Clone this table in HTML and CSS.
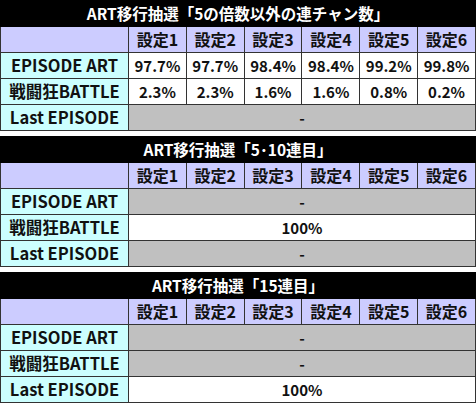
FILE: index.html
```html
<!DOCTYPE html>
<html lang="ja">
<head>
  <meta charset="UTF-8" />
  <meta name="viewport" content="width=device-width, initial-scale=1.0" />
  <title>ART移行抽選</title>
  <link rel="stylesheet" href="styles.css">
</head>
<body>
  <table class="rate-table">
    <colgroup><col class="col-label"><col><col><col><col><col><col></colgroup>
    <tr><th class="title" colspan="7">ART移行抽選「5の倍数以外の連チャン数」</th></tr>
    <tr class="settings"><th class="blank"></th><th>設定1</th><th>設定2</th><th>設定3</th><th>設定4</th><th>設定5</th><th>設定6</th></tr>
    <tr><th class="label">EPISODE ART</th><td>97.7%</td><td>97.7%</td><td>98.4%</td><td>98.4%</td><td>99.2%</td><td>99.8%</td></tr>
    <tr><th class="label">戦闘狂BATTLE</th><td>2.3%</td><td>2.3%</td><td>1.6%</td><td>1.6%</td><td>0.8%</td><td>0.2%</td></tr>
    <tr><th class="label">Last EPISODE</th><td class="none" colspan="6">-</td></tr>
  </table>

  <table class="rate-table">
    <colgroup><col class="col-label"><col><col><col><col><col><col></colgroup>
    <tr><th class="title" colspan="7">ART移行抽選「5･10連目」</th></tr>
    <tr class="settings"><th class="blank"></th><th>設定1</th><th>設定2</th><th>設定3</th><th>設定4</th><th>設定5</th><th>設定6</th></tr>
    <tr><th class="label">EPISODE ART</th><td class="none" colspan="6">-</td></tr>
    <tr><th class="label">戦闘狂BATTLE</th><td colspan="6">100%</td></tr>
    <tr><th class="label">Last EPISODE</th><td class="none" colspan="6">-</td></tr>
  </table>

  <table class="rate-table">
    <colgroup><col class="col-label"><col><col><col><col><col><col></colgroup>
    <tr><th class="title" colspan="7">ART移行抽選「15連目」</th></tr>
    <tr class="settings"><th class="blank"></th><th>設定1</th><th>設定2</th><th>設定3</th><th>設定4</th><th>設定5</th><th>設定6</th></tr>
    <tr><th class="label">EPISODE ART</th><td class="none" colspan="6">-</td></tr>
    <tr><th class="label">戦闘狂BATTLE</th><td class="none" colspan="6">-</td></tr>
    <tr><th class="label">Last EPISODE</th><td colspan="6">100%</td></tr>
  </table>
</body>
</html>
```

FILE: styles.css
```css
body {
  margin: 0;
  background-color: white;
  font-family: "Noto Sans CJK JP", "Noto Sans", sans-serif;
}
.rate-table {
  width: 476px;
  table-layout: fixed;
  border-collapse: collapse;
  margin-bottom: 5px;
  font-size: 15px;
  font-weight: bold;
  color: #111;
}
.col-label {
  width: 128px;
}
.rate-table th, .rate-table td {
  border: 1px solid #333;
  height: 25px;
  padding: 0;
  text-align: center;
  line-height: 25px;
  white-space: nowrap;
}
.rate-table .title {
  background-color: #000;
  color: white;
  border-color: #000;
  font-size: 15.5px;
}
.settings th {
  background-color: #ccccff;
  font-size: 16px;
}
.rate-table .label {
  background-color: #ccffff;
  font-size: 16.5px;
}
.rate-table td {
  background-color: white;
}
.rate-table td.none {
  background-color: #c0c0c0;
}
```
